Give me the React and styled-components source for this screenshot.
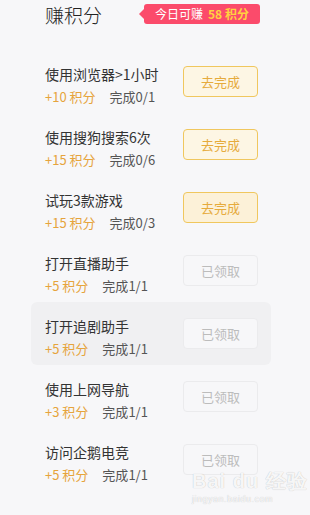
import React from "react";
import styled, { createGlobalStyle } from "styled-components";

const Global = createGlobalStyle`
  html, body { margin: 0; padding: 0; background: #f7f7f9; }
  body { font-family: "Noto Sans CJK SC", "Noto Sans", sans-serif; }
  * { box-sizing: border-box; }
`;

const Page = styled.div`
  position: relative;
  width: 310px;
  height: 515px;
  background: #f7f7f9;
  overflow: hidden;
`;

const Header = styled.div`
  display: flex;
  align-items: center;
  height: 28px;
  padding-left: 45px;
  padding-top: 1px;
`;

const Title = styled.h1`
  margin: 0;
  font-size: 19px;
  line-height: 26px;
  font-weight: 300;
  color: #222;
`;

const Badge = styled.div`
  position: relative;
  margin-left: 42px;
  margin-top: -2px;
  height: 20px;
  width: 116px;
  display: flex;
  align-items: center;
  padding-left: 11px;
  background: #fb4b6b;
  border-radius: 3px;
  font-size: 12px;
  color: #fff;
  white-space: nowrap;
  &::before {
    content: "";
    position: absolute;
    left: -5px;
    top: 5px;
    border-top: 5px solid transparent;
    border-bottom: 5px solid transparent;
    border-right: 5px solid #fb4b6b;
  }
`;

const BadgeNum = styled.span`
  margin-left: 5px;
  color: #ffd23f;
  font-weight: 700;
`;

const List = styled.div`
  display: flex;
  flex-direction: column;
  margin-top: 22px;
  padding: 0 39px 0 31px;
`;

const Row = styled.div`
  display: flex;
  align-items: center;
  justify-content: space-between;
  height: 63px;
  padding: 0 13px 0 14px;
  border-radius: 6px;
  background: ${(p) => (p.$active ? "#f0f0f2" : "transparent")};
`;

const Info = styled.div`
  display: flex;
  flex-direction: column;
  gap: 4px;
  padding-top: 7px;
`;

const TaskName = styled.div`
  font-size: 14px;
  line-height: 20px;
  color: #333;
`;

const Meta = styled.div`
  display: flex;
  gap: 14px;
  font-size: 13px;
  line-height: 18px;
`;

const Points = styled.span`
  color: #e6a43c;
`;

const Progress = styled.span`
  color: #555;
`;

const Button = styled.button`
  width: 75px;
  height: 31px;
  border-radius: 4px;
  font-family: inherit;
  font-size: 13px;
  padding: 0;
  cursor: pointer;
  border: 1px solid ${(p) => (p.$done ? "#ebebed" : "#f0c75e")};
  background: ${(p) => (p.$done ? "#f7f7f9" : p.$hover ? "#fcf1d8" : "#fdf6e4")};
  color: ${(p) => (p.$done ? "#bcbcbc" : "#e6ab3c")};
`;

const Watermark = styled.div`
  position: absolute;
  left: 192px;
  top: 470px;
  color: rgba(255, 255, 255, 0.9);
  text-shadow: 0 0 1px rgba(0, 0, 0, 0.14), 0 0 1px rgba(0, 0, 0, 0.14);
  font-family: "Liberation Sans", sans-serif;
  pointer-events: none;
`;

const WmMain = styled.div`
  font-size: 20px;
  font-weight: 700;
  line-height: 22px;
  letter-spacing: 1px;
`;

const WmSub = styled.div`
  font-size: 9px;
  line-height: 10px;
  margin-top: 2px;
  letter-spacing: 0.5px;
`;

const tasks = [
  { name: "使用浏览器>1小时", pts: 10, prog: "0/1", done: false },
  { name: "使用搜狗搜索6次", pts: 15, prog: "0/6", done: false },
  { name: "试玩3款游戏", pts: 15, prog: "0/3", done: false, hover: true },
  { name: "打开直播助手", pts: 5, prog: "1/1", done: true },
  { name: "打开追剧助手", pts: 5, prog: "1/1", done: true, active: true },
  { name: "使用上网导航", pts: 3, prog: "1/1", done: true },
  { name: "访问企鹅电竞", pts: 5, prog: "1/1", done: true },
];

export default function App() {
  return (
    <Page>
      <Global />
      <Header>
        <Title>赚积分</Title>
        <Badge>
          今日可赚<BadgeNum>58 积分</BadgeNum>
        </Badge>
      </Header>
      <List>
        {tasks.map((t) => (
          <Row key={t.name} $active={t.active}>
            <Info>
              <TaskName>{t.name}</TaskName>
              <Meta>
                <Points>+{t.pts} 积分</Points>
                <Progress>完成{t.prog}</Progress>
              </Meta>
            </Info>
            <Button $done={t.done} $hover={t.hover}>
              {t.done ? "已领取" : "去完成"}
            </Button>
          </Row>
        ))}
      </List>
      <Watermark>
        <WmMain>Bai du 经验</WmMain>
        <WmSub>jingyan.baidu.com</WmSub>
      </Watermark>
    </Page>
  );
}
